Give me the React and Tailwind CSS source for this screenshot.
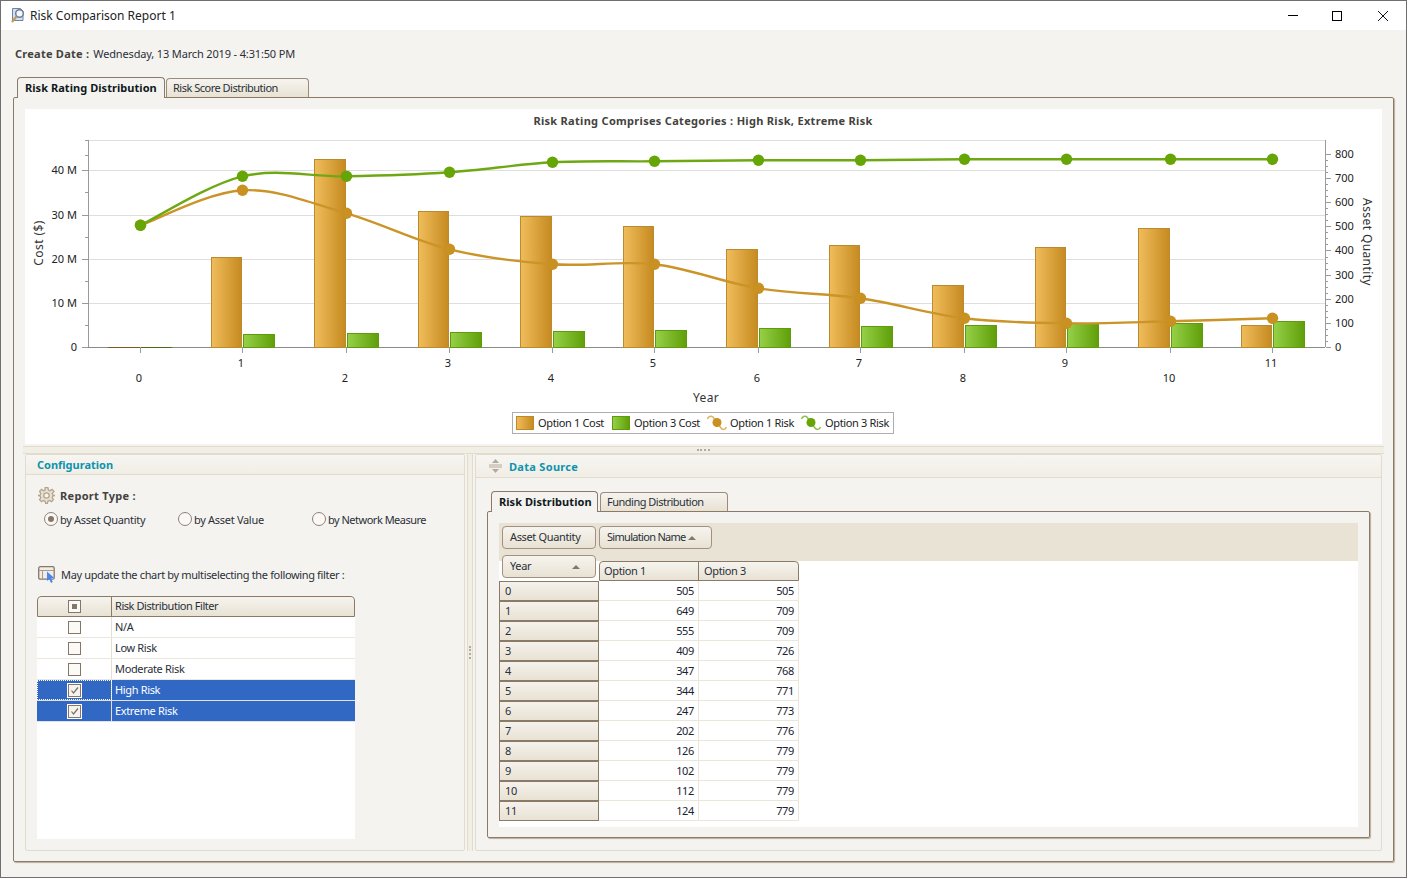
import React from "react";

const xs = [140, 242, 346, 449, 552, 654, 758, 860, 964, 1066, 1170, 1272];
const costTops = [347, 257, 159, 211, 216, 226, 249, 245, 285, 247, 228, 325];
const greenTops = [347, 334, 333, 332, 331, 330, 328, 326, 325, 323, 323, 321];
const option1Y = [225, 190, 213, 249, 264, 264, 288, 298, 318, 323, 321, 318];
const option3Y = [225, 176, 176, 172, 162, 161, 160, 160, 159, 159, 159, 159];
const pivot = [
  [0, 505, 505], [1, 649, 709], [2, 555, 709], [3, 409, 726], [4, 347, 768], [5, 344, 771],
  [6, 247, 773], [7, 202, 776], [8, 126, 779], [9, 102, 779], [10, 112, 779], [11, 124, 779],
];
const filters = [
  { name: "N/A" },
  { name: "Low Risk" },
  { name: "Moderate Risk" },
  { name: "High Risk", on: true, focus: true },
  { name: "Extreme Risk", on: true },
];

function spline(ys) {
  const pts = xs.map((x, i) => [x + 0.5, ys[i] + 0.3]);
  let d = `M${pts[0][0]} ${pts[0][1]}`;
  for (let i = 0; i < pts.length - 1; i++) {
    const p0 = pts[Math.max(i - 1, 0)];
    const p1 = pts[i];
    const p2 = pts[i + 1];
    const p3 = pts[Math.min(i + 2, pts.length - 1)];
    const c1 = [p1[0] + (p2[0] - p0[0]) / 6, p1[1] + (p2[1] - p0[1]) / 6];
    const c2 = [p2[0] - (p3[0] - p1[0]) / 6, p2[1] - (p3[1] - p1[1]) / 6];
    d += ` C${c1[0]} ${c1[1]} ${c2[0]} ${c2[1]} ${p2[0]} ${p2[1]}`;
  }
  return d;
}

function Chart() {
  const leftTicks = [[347, "0"], [303, "10 M"], [259, "20 M"], [215, "30 M"], [170, "40 M"]];
  const rightTicks = [0, 100, 200, 300, 400, 500, 600, 700, 800];
  return (
    <svg width="1357" height="303" viewBox="25 109 1357 303" className="block">
      <defs>
        <linearGradient id="orange">
          <stop offset="0" stopColor="#f0bd5c" />
          <stop offset="1" stopColor="#c68a20" />
        </linearGradient>
        <linearGradient id="green">
          <stop offset="0" stopColor="#96d048" />
          <stop offset="1" stopColor="#5f9f08" />
        </linearGradient>
      </defs>
      <text x="703" y="125" textAnchor="middle" fontSize="11" fontWeight="700" letterSpacing="0.3" fill="#44423e">
        Risk Rating Comprises Categories : High Risk, Extreme Risk
      </text>

      {[140.5, 170.5, 215.5, 259.5, 303.5].map((y) => (
        <line key={y} x1="88" x2="1325" y1={y} y2={y} stroke="#dedede" />
      ))}
      <line x1="88.5" x2="88.5" y1="140" y2="347" stroke="#9a9a9a" />
      <line x1="1325.5" x2="1325.5" y1="140" y2="347" stroke="#9a9a9a" />
      <line x1="88" x2="1325" y1="347.5" y2="347.5" stroke="#8a8a8a" />

      {[140, 155, 170, 192, 215, 237, 259, 281, 303, 325].map((y) => (
        <line key={y} x1="85" x2="88" y1={y + 0.5} y2={y + 0.5} stroke="#9a9a9a" />
      ))}
      {leftTicks.map(([y, label]) => (
        <g key={label}>
          <line x1="82" x2="88" y1={y + 0.5} y2={y + 0.5} stroke="#9a9a9a" />
          <text x="77" y={y + 4} textAnchor="end" fontSize="11" letterSpacing="0" fill="#222">{label}</text>
        </g>
      ))}

      {rightTicks.map((v, i) => {
        const y = Math.round(347 - v * 0.2415);
        return (
          <g key={v}>
            <line x1="1326" x2="1331" y1={y + 0.5} y2={y + 0.5} stroke="#9a9a9a" />
            {[1, 2, 3].map((m) =>
              i < 8 ? (
                <line key={m} x1="1326" x2="1328" y1={Math.round(y - m * 6.04) + 0.5} y2={Math.round(y - m * 6.04) + 0.5} stroke="#9a9a9a" />
              ) : null
            )}
            <text x="1335" y={y + 4} fontSize="11" letterSpacing="0" fill="#222">{v}</text>
          </g>
        );
      })}

      {xs.map((x, i) => (
        <g key={x}>
          <line x1={x + 0.5} x2={x + 0.5} y1="347" y2="353" stroke="#9a9a9a" />
          <text x={x - 1} y={i % 2 ? 367 : 382} textAnchor="middle" fontSize="11" letterSpacing="0" fill="#222">{i}</text>
        </g>
      ))}

      <line x1="108" x2="140" y1="347.5" y2="347.5" stroke="#7a5a20" />
      <line x1="141" x2="172" y1="347.5" y2="347.5" stroke="#4c6a1a" />
      {xs.slice(1).map((x, i) => {
        const cw = i % 2 ? 31 : 30;
        return (
          <g key={x}>
            <rect x={x - cw - 0.5} y={costTops[i + 1] + 0.5} width={cw} height={347 - costTops[i + 1]} fill="url(#orange)" stroke="#b98a2e" />
            <rect x={x + 1.5} y={greenTops[i + 1] + 0.5} width="31" height={347 - greenTops[i + 1]} fill="url(#green)" stroke="#5f9c0b" />
          </g>
        );
      })}

      <path d={spline(option1Y)} fill="none" stroke="#cb9428" strokeWidth="2.4" />
      <path d={spline(option3Y)} fill="none" stroke="#6ea914" strokeWidth="2.4" />
      {xs.map((x, i) => <circle key={x} cx={x + 0.5} cy={option1Y[i] + 0.3} r="5.7" fill="#c99022" />)}
      {xs.map((x, i) => <circle key={x} cx={x + 0.5} cy={option3Y[i] + 0.3} r="5.7" fill="#65a506" />)}

      <text transform="translate(43 243) rotate(-90)" textAnchor="middle" fontSize="12" letterSpacing="0.4" fill="#333">Cost ($)</text>
      <text transform="translate(1363 242) rotate(90)" textAnchor="middle" fontSize="12" letterSpacing="0.4" fill="#333">Asset Quantity</text>
      <text x="706" y="402" textAnchor="middle" fontSize="12" letterSpacing="0.4" fill="#333">Year</text>
    </svg>
  );
}

function LegendSwatch({ from, to, border }) {
  return (
    <svg width="18" height="14" className="shrink-0">
      <defs>
        <linearGradient id={"sw" + border.slice(1)}>
          <stop offset="0" stopColor={from} />
          <stop offset="1" stopColor={to} />
        </linearGradient>
      </defs>
      <rect x="0.5" y="0.5" width="17" height="13" fill={`url(#sw${border.slice(1)})`} stroke={border} />
    </svg>
  );
}

function LegendLine({ color, dot }) {
  return (
    <svg width="20" height="16" className="shrink-0">
      <path d="M0.500 4 C1 1.500 4 0.500 6 2 L14 13 C15.500 15 18 15 19.500 12" fill="none" stroke={color} strokeWidth="1.500" />
      <circle cx="10" cy="7.500" r="4.500" fill={dot} />
    </svg>
  );
}

function Legend() {
  return (
    <div className="flex justify-center pr-px">
      <div className="flex items-center h-[22px] w-[382px] border border-[#adadad] pl-[3px] text-[#222] whitespace-nowrap">
        <LegendSwatch from="#f0bd5c" to="#c68a20" border="#bd8a2a" />
        <span className="ml-[4px] w-[74px] pb-px">Option 1 Cost</span>
        <LegendSwatch from="#96d048" to="#5f9f08" border="#5f9c0b" />
        <span className="ml-[4px] w-[73px] pb-px">Option 3 Cost</span>
        <LegendLine color="#e0b060" dot="#c99022" />
        <span className="ml-[3px] w-[71px] pb-px">Option 1 Risk</span>
        <LegendLine color="#8cc04a" dot="#65a506" />
        <span className="ml-[4px] pb-px">Option 3 Risk</span>
      </div>
    </div>
  );
}

function Tab({ label, active, width }) {
  if (active) {
    return (
      <div className={`${width} h-[21px] relative z-10 -mb-px bg-[#f5f3ef] border border-b-0 border-[#8c7a68] rounded-t-[4px] pl-[7px] pb-px flex items-center font-bold tracking-[0.05px] text-[#101820] whitespace-nowrap`}>
        {label}
      </div>
    );
  }
  return (
    <div className={`${width} h-[19px] bg-gradient-to-b from-[#f6f4f0] to-[#e8e2d3] border border-b-0 border-[#9b8b7b] rounded-t-[4px] pl-[6px] pb-px flex items-center tracking-[-0.5px] text-[#2a3038] whitespace-nowrap`}>
      {label}
    </div>
  );
}

function Check({ on, partial }) {
  return (
    <div className={`w-[13px] h-[13px] flex items-center justify-center border border-[#86766a] ${on ? "bg-[#f5f3ef] outline outline-1 outline-white" : "bg-[#fbfaf7]"}`}>
      {on && (
        <svg width="9" height="9" viewBox="0 0 9 9">
          <path d="M1.5 4.5 L3.5 7 L8 1.5" fill="none" stroke="#7b6e62" strokeWidth="1.2" />
        </svg>
      )}
      {partial && <div className="w-[5px] h-[5px] bg-[#86766a]" />}
    </div>
  );
}

function Radio({ label, on, width, tight }) {
  return (
    <div className={`${width} flex items-center whitespace-nowrap`}>
      <div className="w-[14px] h-[14px] rounded-full border border-[#8f8277] bg-[#faf9f6] flex items-center justify-center">
        {on && <div className="w-[6px] h-[6px] rounded-full bg-[#86766a]" />}
      </div>
      <span className={`ml-[2px] ${tight ? "tracking-[-0.5px]" : "tracking-[-0.3px]"}`}>{label}</span>
    </div>
  );
}

function GearIcon() {
  return (
    <svg width="17" height="17" viewBox="0 0 24 24" fill="#e9e1d0" stroke="#b3a390" strokeWidth="1.8">
      <path d="M10 1h4l.7 3.200 2.300 1 2.800-1.800 2.800 2.800L20 9l1 2.300L24 12v0l-3 .7-1 2.300 1.800 2.800-2.800 2.800L16.200 19l-2.200 1L13.300 23h-2.600L10 20l-2.200-1-2.800 1.800-2.800-2.800L4 15l-1-2.300L0 12l3-.7L4 9 2.200 6.200 5 3.400 7.800 5.200 10 4.200z" />
      <circle cx="12" cy="12" r="3.800" fill="#f5f3ef" />
    </svg>
  );
}

function SelectIcon() {
  return (
    <svg width="17" height="17" viewBox="0 0 17 17">
      <rect x="0.7" y="0.700" width="15.500" height="12.500" rx="1.500" fill="#f1ede4" stroke="#85776b" strokeWidth="1.300" />
      <path d="M1 4.500h15M4.500 4.500v8.500" stroke="#a89a8c" fill="none" />
      <path d="M9 5.500 L9 15 L11.200 13 L13 17 L14.800 16 L13 12.300 L16 11.800 Z" fill="#4a86f2" />
    </svg>
  );
}

function TitleIcon() {
  return (
    <svg width="16" height="17" viewBox="0 0 16 17">
      <path d="M2.500 1.500h8l2.500 2.500v9.500h-10.500z" fill="#d3dff0" stroke="#6a84ab" />
      <circle cx="9.500" cy="6.500" r="3.800" fill="#f4f7fb" stroke="#6f7f92" strokeWidth="1.500" />
      <path d="M6.500 9.500 L2 15" stroke="#c29a5a" strokeWidth="2.200" />
    </svg>
  );
}

function CollapseIcon() {
  return (
    <svg width="13" height="14" viewBox="0 0 13 14" fill="#b5a99b">
      <path d="M6.500 0 L10 4 H3 Z" />
      <path d="M0 5.500h13v1H0zM0 7.500h13v1H0z" />
      <path d="M6.500 14 L10 10 H3 Z" />
    </svg>
  );
}

function PivotButton({ label, width, sort, tight }) {
  return (
    <div className={`${width} h-[23px] shrink-0 flex items-center justify-between pl-[7px] pr-[15px] pb-[2px] rounded-[4px] border border-[#a3907e] bg-gradient-to-b from-[#f6f4ef] to-[#e8e2d3] text-[#2a3038] whitespace-nowrap`}>
      <span className={tight ? "tracking-[-0.7px]" : ""}>{label}</span>
      {sort && <div className="w-0 h-0 mt-[2px] border-x-[4px] border-x-transparent border-b-[4px] border-b-[#85766a]" />}
    </div>
  );
}

function ConfigPanel() {
  return (
    <div className="w-[440px] h-[397px] border border-[#e2dccf] rounded-[2px] text-[#2a3038]">
      <div className="h-[20px] pl-[11px] flex items-center font-bold tracking-normal text-[#0d93ad] border-b border-[#e2dccf] bg-gradient-to-b from-[#f7f5f2] to-[#f1eee6]">
        Configuration
      </div>
      <div className="pl-[11px]">
        <div className="flex items-center h-[17px] mt-[12px] pl-px">
          <GearIcon />
          <span className="ml-[5px] font-bold tracking-[0.3px] text-[#44423e]">Report Type :</span>
        </div>
        <div className="flex items-center h-[16px] mt-[7px] pl-[7px]">
          <Radio label="by Asset Quantity" on width="w-[134px]" />
          <Radio label="by Asset Value" width="w-[134px]" />
          <Radio label="by Network Measure" tight />
        </div>
        <div className="flex items-center h-[16px] mt-[39px] pl-px whitespace-nowrap">
          <SelectIcon />
          <span className="ml-[6px]">May update the chart by multiselecting the following filter :</span>
        </div>
        <div className="w-[318px] h-[243px] mt-[14px] bg-white">
          <div className="h-[21px] flex bg-gradient-to-b from-[#f6f4ef] to-[#e8e2d3] border border-[#8c7a68] rounded-t-[4px]">
            <div className="w-[74px] flex items-center justify-center border-r border-[#8c7a68]">
              <Check partial />
            </div>
            <div className="flex items-center pl-[3px] pb-[2px] tracking-[-0.45px]">Risk Distribution Filter</div>
          </div>
          {filters.map((f) => (
            <div key={f.name} className={`h-[21px] flex border-b ${f.on ? "bg-[#3068c4] text-white border-[#dfe4ec]" : "border-[#ebe7dd]"}`}>
              <div className={`w-[75px] flex items-center justify-center border-r border-[#e4dfd3] ${f.focus ? "outline outline-1 -outline-offset-1 outline-dotted outline-white" : ""}`}>
                <Check on={f.on} />
              </div>
              <div className="flex items-center pl-[3px] pb-[2px]">{f.name}</div>
            </div>
          ))}
        </div>
      </div>
    </div>
  );
}

function DataPanel() {
  return (
    <div className="w-[907px] h-[397px] border border-[#e2dccf] rounded-[2px] text-[#2a3038]">
      <div className="h-[23px] pl-[13px] flex items-center border-b border-[#e2dccf] bg-gradient-to-b from-[#f7f5f2] to-[#f1eee6]">
        <CollapseIcon />
        <span className="ml-[7px] font-bold tracking-[0.3px] text-[#0d93ad]">Data Source</span>
      </div>
      <div className="pl-[11px] pt-[12px]">
        <div className="flex items-end gap-[2px] h-[21px] pl-[4px]">
          <Tab label="Risk Distribution" active width="w-[107px]" />
          <Tab label="Funding Distribution" width="w-[128px]" />
        </div>
        <div className="w-[883px] h-[327px] border border-[#8c7a68] rounded-[2px] shadow-[1px_1px_1px_#b9ae9f] pt-[11px] pl-[11px]">
          <div className="w-[859px] h-[304px] bg-white">
            <div className="h-[38px] bg-[#e9e3d5] flex gap-[3px] pl-[3px] pt-[3px]">
              <PivotButton label="Asset Quantity" width="w-[94px]" />
              <PivotButton label="Simulation Name" width="w-[113px]" sort tight />
            </div>
            <div className="flex h-[26px] -mt-[6px]">
              <div className="w-[100px] pl-[3px]">
                <PivotButton label="Year" width="w-[94px]" sort />
              </div>
              <div className="flex h-[20px] mt-[6px] bg-gradient-to-b from-[#f6f4ef] to-[#e8e2d3] border border-[#8c7a68] rounded-t-[4px]">
                <div className="w-[99px] pl-[4px] pb-px flex items-center border-r border-[#8c7a68]">Option 1</div>
                <div className="w-[99px] pl-[5px] pb-px flex items-center">Option 3</div>
              </div>
            </div>
            {pivot.map(([year, a, b]) => (
              <div key={year} className="flex h-[20px]">
                <div className="w-[100px] pl-[5px] pb-px flex items-center border border-t-0 first:border-t border-[#8c7a68] bg-gradient-to-b from-[#f5f2ec] to-[#e8e2d3]">
                  {year}
                </div>
                <div className="w-[100px] pr-[4px] pb-px flex items-center justify-end border-r border-b border-[#ebe6da] text-[#1a2330]">{a}</div>
                <div className="w-[100px] pr-[4px] pb-px flex items-center justify-end border-r border-b border-[#ebe6da] text-[#1a2330]">{b}</div>
              </div>
            ))}
          </div>
        </div>
      </div>
    </div>
  );
}

export default function App() {
  return (
    <div className="w-[1407px] h-[878px] border border-[#6f6f6f] flex flex-col font-['Noto_Sans',sans-serif] text-[11px] leading-none tracking-[-0.35px] bg-[#f5f3ef]">
      <div className="h-[29px] shrink-0 bg-white flex items-center pl-[9px] text-[12px] tracking-normal text-[#222]">
        <TitleIcon />
        <span className="ml-[4px]">Risk Comparison Report 1</span>
        <div className="ml-auto flex items-center">
          <div className="w-[10px] h-px bg-black mr-[34px]" />
          <div className="w-[10px] h-[10px] border border-black mr-[36px]" />
          <svg width="10" height="10" viewBox="0 0 10 10" className="mr-[18px]">
            <path d="M0 0L10 10M10 0L0 10" stroke="#111" fill="none" />
          </svg>
        </div>
      </div>

      <div className="pl-[12px] pt-[16px]">
        <div className="pl-[2px] h-[14px] flex items-center text-[#2a3038] whitespace-nowrap">
          <span className="font-bold tracking-[0.25px] text-[#44423e]">Create Date :</span>
          <span className="ml-[4px] tracking-[-0.15px]">Wednesday, 13 March 2019 - 4:31:50 PM</span>
        </div>
        <div className="flex items-end gap-px h-[21px] pl-[4px] mt-[16px]">
          <Tab label="Risk Rating Distribution" active width="w-[148px]" />
          <Tab label="Risk Score Distribution" width="w-[143px]" />
        </div>
        <div className="w-[1381px] h-[765px] border border-[#8c7a68] rounded-[2px] shadow-[1px_1px_1px_#b9ae9f] pl-[11px] pt-[11px]">
          <div className="w-[1357px] h-[335px] bg-white">
            <Chart />
            <Legend />
          </div>
          <div className="w-[1361px] -ml-[2px] h-[8px] mt-[2px] flex items-center justify-center border-y border-[#e2dccf] bg-[#f1eee6]">
            <div className="w-[13px] h-[2px] border-b-2 border-dotted border-[#b5a99b]" />
          </div>
          <div className="flex">
            <ConfigPanel />
            <div className="w-[6px] mx-[2px] h-[397px] border-x border-[#e2dccf] bg-[#f1eee6] flex items-center justify-center">
              <div className="w-[2px] h-[13px] border-r-2 border-dotted border-[#b5a99b]" />
            </div>
            <DataPanel />
          </div>
        </div>
      </div>
    </div>
  );
}
